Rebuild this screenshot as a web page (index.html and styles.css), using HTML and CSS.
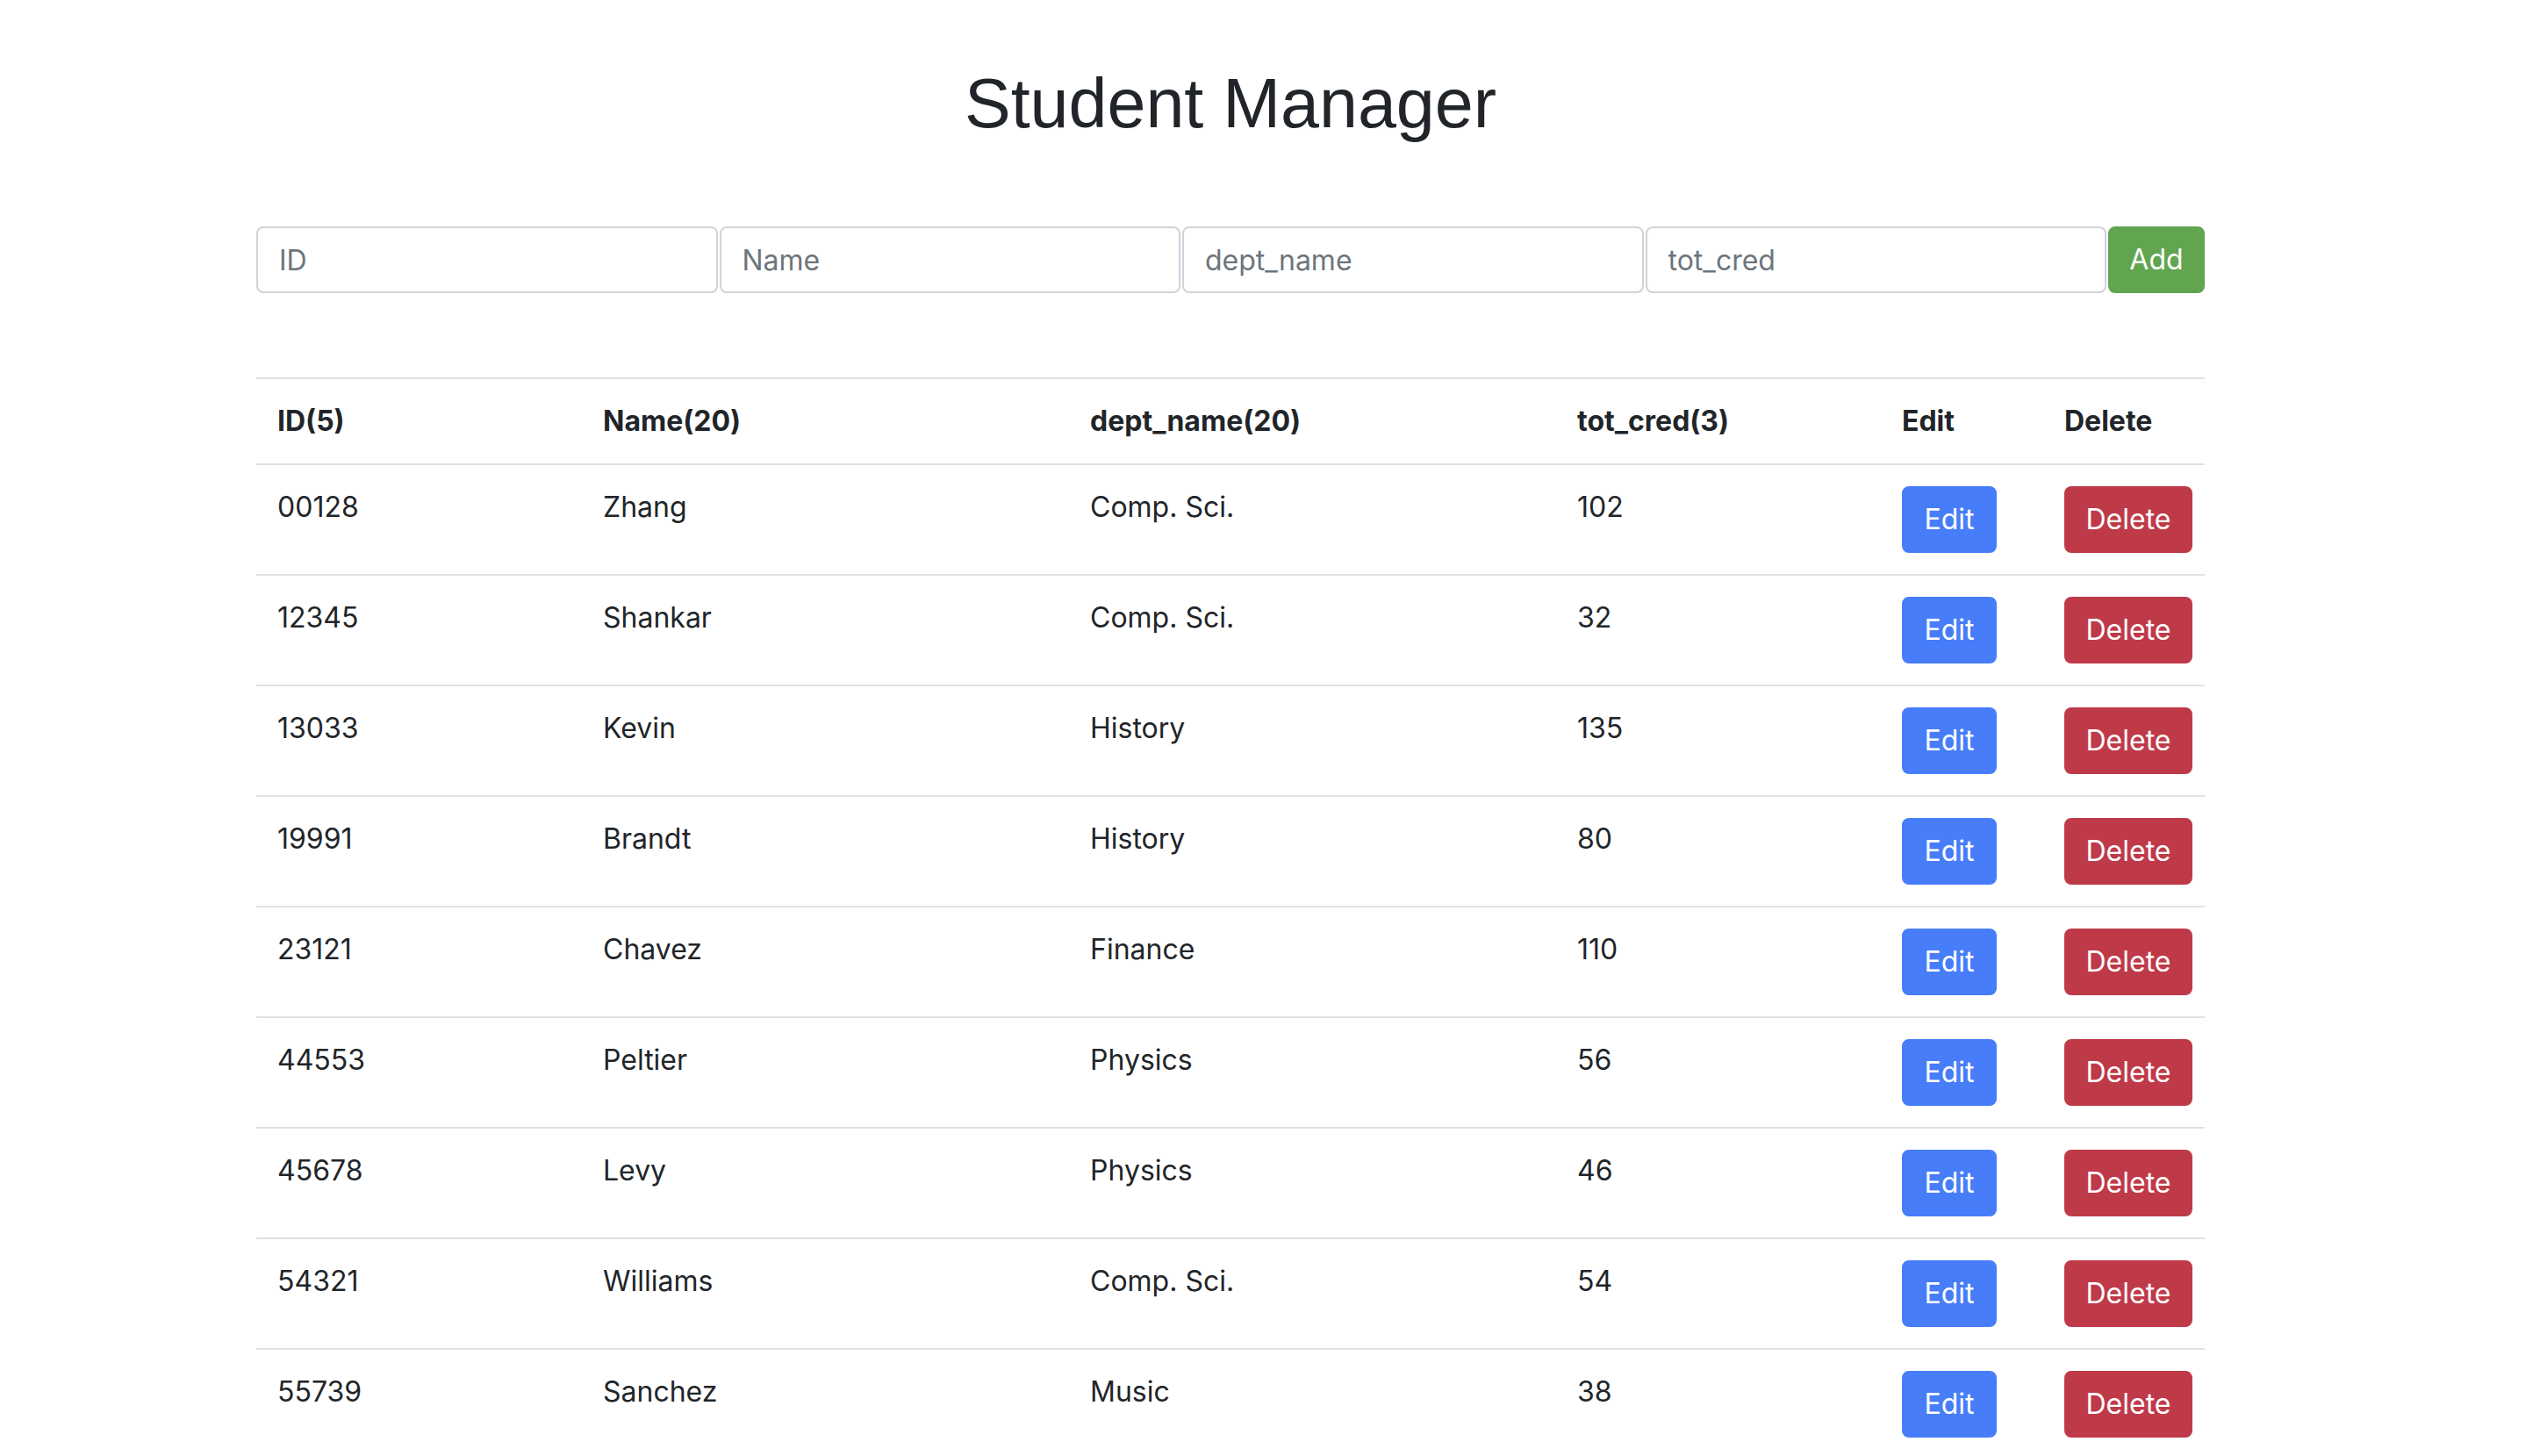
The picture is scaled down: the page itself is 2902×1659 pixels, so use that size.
FILE: index.html
```html
<!DOCTYPE html>
<html lang="en">
<head>
<meta charset="utf-8">
<title>Student Manager</title>
<link rel="stylesheet" href="styles.css">
</head>
<body>
<div class="container">
  <h1 class="title">Student Manager</h1>
  <div class="add-form">
    <input class="field" type="text" placeholder="ID">
    <input class="field" type="text" placeholder="Name">
    <input class="field" type="text" placeholder="dept_name">
    <input class="field" type="text" placeholder="tot_cred">
    <button class="btn btn-add">Add</button>
  </div>
  <table class="table">
    <colgroup>
      <col class="c-id"><col class="c-name"><col class="c-dept"><col class="c-cred"><col class="c-edit"><col class="c-del">
    </colgroup>
    <thead>
      <tr><th>ID(5)</th><th>Name(20)</th><th>dept_name(20)</th><th>tot_cred(3)</th><th>Edit</th><th>Delete</th></tr>
    </thead>
    <tbody>
      <tr><td>00128</td><td>Zhang</td><td>Comp. Sci.</td><td>102</td><td><button class="btn btn-edit">Edit</button></td><td><button class="btn btn-del">Delete</button></td></tr>
      <tr><td>12345</td><td>Shankar</td><td>Comp. Sci.</td><td>32</td><td><button class="btn btn-edit">Edit</button></td><td><button class="btn btn-del">Delete</button></td></tr>
      <tr><td>13033</td><td>Kevin</td><td>History</td><td>135</td><td><button class="btn btn-edit">Edit</button></td><td><button class="btn btn-del">Delete</button></td></tr>
      <tr><td>19991</td><td>Brandt</td><td>History</td><td>80</td><td><button class="btn btn-edit">Edit</button></td><td><button class="btn btn-del">Delete</button></td></tr>
      <tr><td>23121</td><td>Chavez</td><td>Finance</td><td>110</td><td><button class="btn btn-edit">Edit</button></td><td><button class="btn btn-del">Delete</button></td></tr>
      <tr><td>44553</td><td>Peltier</td><td>Physics</td><td>56</td><td><button class="btn btn-edit">Edit</button></td><td><button class="btn btn-del">Delete</button></td></tr>
      <tr><td>45678</td><td>Levy</td><td>Physics</td><td>46</td><td><button class="btn btn-edit">Edit</button></td><td><button class="btn btn-del">Delete</button></td></tr>
      <tr><td>54321</td><td>Williams</td><td>Comp. Sci.</td><td>54</td><td><button class="btn btn-edit">Edit</button></td><td><button class="btn btn-del">Delete</button></td></tr>
      <tr><td>55739</td><td>Sanchez</td><td>Music</td><td>38</td><td><button class="btn btn-edit">Edit</button></td><td><button class="btn btn-del">Delete</button></td></tr>
    </tbody>
  </table>
</div>
</body>
</html>
```
FILE: styles.css
```css
html, body {
  margin: 0;
  padding: 0;
  background: #ffffff;
}
body {
  font-family: Inter, "Noto Sans", "Liberation Sans", sans-serif;
  font-size: 32px;
  line-height: 48px;
  color: #212529;
  overflow: hidden;
  height: 1659px;
}
.container {
  width: 2220px;
  margin-left: 292px;
  padding-top: 70px;
}
.title {
  margin: 0;
  font-family: "Liberation Sans", Arial, sans-serif;
  font-weight: 400;
  font-size: 79px;
  line-height: 96px;
  text-align: center;
  color: #212529;
}
.add-form {
  display: flex;
  gap: 2px;
  margin-top: 92px;
}
.field {
  flex: 1;
  min-width: 0;
  box-sizing: border-box;
  height: 76px;
  border: 2px solid #ced4da;
  border-radius: 8px;
  padding: 12px 24px;
  font-family: inherit;
  font-size: 32px;
  color: #495057;
  background: #fff;
  outline: none;
}
.field::placeholder {
  color: #6c757d;
}
.btn {
  box-sizing: border-box;
  height: 76px;
  border: 2px solid transparent;
  border-radius: 8px;
  padding: 12px 24px;
  font-family: inherit;
  font-size: 32px;
  line-height: 48px;
  color: #fff;
  cursor: pointer;
}
.btn-add {
  width: 110px;
  padding: 12px 0;
  background: #61a550;
  border-color: #61a550;
}
.btn-edit {
  width: 108px;
  padding: 12px 0;
  background: #477df9;
  border-color: #477df9;
}
.btn-del {
  width: 146px;
  padding: 12px 0;
  background: #bf3a49;
  border-color: #bf3a49;
}
.table {
  width: 2220px;
  margin-top: 96px;
  border-collapse: collapse;
  table-layout: fixed;
}
.c-id { width: 371px; }
.c-name { width: 555px; }
.c-dept { width: 555px; }
.c-cred { width: 370px; }
.c-edit { width: 185px; }
.c-del { width: 184px; }
.table th,
.table td {
  padding: 24px;
  text-align: left;
  vertical-align: top;
  border-top: 2px solid #dee2e6;
  white-space: nowrap;
}
.table th {
  font-weight: 700;
}
```
